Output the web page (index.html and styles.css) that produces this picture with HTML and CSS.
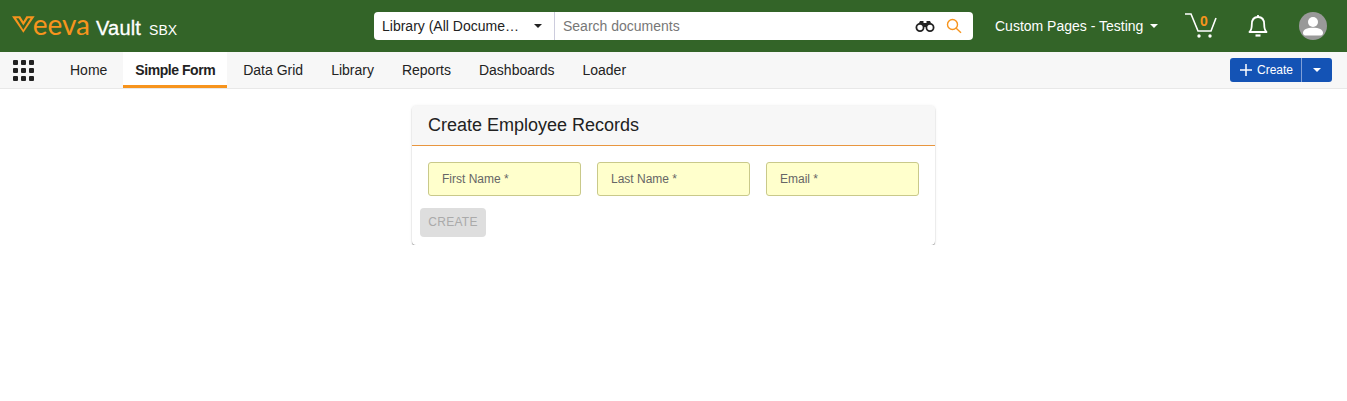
FILE: index.html
```html
<!DOCTYPE html>
<html>
<head>
	<title>Vault</title>
	<link rel="stylesheet" href="styles.css">
</head>
<body>
	<header class="topbar">
		<div class="brand">
			<span class="veeva"><svg class="veeva-v" viewBox="0 0 22 16" width="24" height="17"><path d="M0 0H8L11 5 14 0H22L11 16Z M4 2 11 13 18 2H15.500L11 9 6.500 2Z" fill="#f7941d" fill-rule="evenodd"/></svg>eeva</span>
			<span class="vault">Vault</span>
			<span class="sbx">SBX</span>
		</div>
		<div class="search">
			<div class="scope"><span class="scope-text">Library (All Docume…</span><i class="caret dark"></i></div>
			<div class="search-input">
				<span class="placeholder">Search documents</span>
				<svg class="binoculars" viewBox="0 0 20 12" width="20" height="12">
					<path d="M3 5 5 1H8.500V3H11.500V1H15L17 5 11.500 7H8.500Z" fill="#222"/>
					<circle cx="5" cy="7.500" r="3.600" fill="#fff" stroke="#222" stroke-width="1.800"/>
					<circle cx="15" cy="7.500" r="3.600" fill="#fff" stroke="#222" stroke-width="1.800"/>
				</svg>
				<svg class="magnifier" viewBox="0 0 16 16" width="16" height="16" fill="none" stroke="#f7941d" stroke-width="1.400"><circle cx="6.500" cy="6.500" r="5"/><path d="M10.200 10.200 15 14.800"/></svg>
			</div>
		</div>
		<div class="user-tools">
			<div class="vault-name">Custom Pages - Testing<i class="caret light"></i></div>
			<div class="cart">
				<svg viewBox="0 0 32 26" width="32" height="26" fill="none" stroke="#fff" stroke-width="1.600"><path d="M0 1H6L13 18H26L31 5"/><circle cx="14" cy="23" r="1.700" fill="#fff" stroke="none"/><circle cx="25" cy="23" r="1.700" fill="#fff" stroke="none"/></svg>
				<span class="cart-count">0</span>
			</div>
			<svg class="bell" viewBox="0 0 20 24" width="20" height="24" fill="none" stroke="#fff" stroke-width="1.800"><path d="M1.500 18C3.500 16 3.800 13.500 3.800 10.500 3.800 6 6 3 10 3S16.200 6 16.200 10.500C16.200 13.500 16.500 16 18.500 18Z" stroke-linejoin="round"/><path d="M10 1V3"/><path d="M7.500 21.500H12.500" stroke-width="2.200"/></svg>
			<svg class="avatar" viewBox="0 0 28 28" width="28" height="28"><circle cx="14" cy="14" r="14" fill="#999"/><circle cx="14" cy="10" r="5" fill="#fff"/><path d="M4 21C4 17.500 8 15.800 14 15.800S24 17.500 24 21C24 23 22.500 23.500 21 23.500H7C5.500 23.500 4 23 4 21Z" fill="#fff"/></svg>
		</div>
	</header>
	<nav class="tabbar">
		<div class="apps">
			<i></i><i></i><i></i><i></i><i></i><i></i><i></i><i></i><i></i>
		</div>
		<ul class="tabs">
			<li>Home</li>
			<li class="active">Simple Form</li>
			<li>Data Grid</li>
			<li>Library</li>
			<li>Reports</li>
			<li>Dashboards</li>
			<li>Loader</li>
		</ul>
		<div class="create-btn">
			<span class="create-main"><svg viewBox="0 0 12 12" width="12" height="12"><path d="M6 0V12M0 6H12" stroke="#fff" stroke-width="1.500"/></svg>Create</span>
			<span class="create-more"><i class="caret light"></i></span>
		</div>
	</nav>
	<main class="page">
		<section class="card">
			<h2 class="card-title">Create Employee Records</h2>
			<div class="card-body">
				<div class="fields">
					<div class="field">First Name *</div>
					<div class="field">Last Name *</div>
					<div class="field">Email *</div>
				</div>
				<button class="submit" disabled>CREATE</button>
			</div>
		</section>
	</main>
</body>
</html>
```

FILE: styles.css
```css
* {
	box-sizing: border-box;
}
body {
	margin: 0;
	background: #fff;
	color: #222;
	font-family: "Liberation Sans", Arial, sans-serif;
	font-size: 14px;
}
.caret {
	display: inline-block;
	width: 0;
	height: 0;
	border-left: 4.5px solid transparent;
	border-right: 4.5px solid transparent;
	border-top: 4.5px solid #fff;
}
.caret.dark {
	border-top-color: #222;
}

/* green bar */
.topbar {
	display: flex;
	align-items: center;
	height: 52px;
	padding-left: 12px;
	background: #336428;
}
.brand {
	display: flex;
	align-items: baseline;
	width: 362px;
	color: #fff;
}
.veeva {
	display: inline-flex;
	align-items: baseline;
	width: 78px;
	color: #f7941d;
	font-family: Lato, sans-serif;
	font-size: 28px;
	line-height: 24px;
}
.veeva-v {
	align-self: center;
	margin-right: -2px;
}
.vault {
	margin-left: 6px;
	font-size: 20px;
	letter-spacing: 0.2px;
	-webkit-text-stroke: 0.3px #fff;
}
.sbx {
	margin-left: 8px;
	font-size: 14px;
}
.search {
	display: flex;
	width: 599px;
	height: 28px;
	background: #fff;
	border-radius: 4px;
}
.scope {
	display: flex;
	align-items: center;
	justify-content: space-between;
	width: 181px;
	padding: 0 12px 0 8px;
	border-right: 1px solid #ccd;
}
.scope-text {
	white-space: nowrap;
}
.search-input {
	display: flex;
	align-items: center;
	flex: 1;
	padding: 0 11px 0 8px;
}
.placeholder {
	flex: 1;
	color: #777;
}
.binoculars {
	margin-right: 11px;
}
.user-tools {
	display: flex;
	align-items: center;
	margin-left: 22px;
	color: #fff;
}
.vault-name {
	display: flex;
	align-items: center;
	gap: 7px;
	width: 190px;
}
.cart {
	position: relative;
	width: 32px;
	height: 26px;
}
.cart-count {
	position: absolute;
	top: 0;
	left: 15px;
	color: #f7941d;
	font-size: 14px;
	font-weight: bold;
}
.bell {
	margin-left: 31px;
}
.avatar {
	margin-left: 31px;
}

/* tab row */
.tabbar {
	display: flex;
	align-items: center;
	height: 37px;
	padding: 0 15px 0 13px;
	background: #f7f7f7;
	border-bottom: 1px solid #e8e8e8;
}
.apps {
	display: grid;
	grid-template-columns: repeat(3, 5px);
	gap: 3px;
	width: 45px;
}
.apps i {
	height: 5px;
	background: #222;
	border-radius: 1px;
}
.tabs {
	display: flex;
	flex: 1;
	gap: 4px;
	height: 36px;
	margin: 0;
	padding: 0;
	list-style: none;
}
.tabs li {
	padding: 10px 12px 0;
}
.tabs .active {
	background: #fff;
	border-bottom: 3px solid #f7941d;
	font-weight: bold;
	letter-spacing: -0.45px;
}
.create-btn {
	display: flex;
	height: 24px;
	color: #fff;
	background: #1453b5;
	border-radius: 3px;
	font-size: 12px;
}
.create-main {
	display: flex;
	align-items: center;
	gap: 5px;
	width: 72px;
	padding-left: 10px;
	border-right: 1px solid #7f9fd8;
}
.create-more {
	display: flex;
	align-items: center;
	justify-content: center;
	width: 30px;
}

/* form */
.page {
	display: flex;
	justify-content: center;
	padding-top: 17px;
}
.card {
	width: 523px;
	border-radius: 4px;
	box-shadow: 0 1px 1px rgba(0, 0, 0, 0.4), 0 0 3px rgba(0, 0, 0, 0.1);
}
.card-title {
	height: 40px;
	margin: 0;
	padding: 9px 16px 0;
	background: #f7f7f7;
	border-bottom: 1px solid #e8963f;
	border-radius: 4px 4px 0 0;
	font-size: 18px;
	font-weight: normal;
}
.card-body {
	padding: 16px 16px 8px 8px;
}
.fields {
	display: flex;
	gap: 16px;
	margin-left: 8px;
}
.field {
	flex: 1;
	height: 34px;
	padding: 9px 13px 0;
	color: #666;
	background: #ffc;
	border: 1px solid #c9c98a;
	border-radius: 3px;
	font-size: 12px;
}
.submit {
	display: block;
	width: 66px;
	height: 29px;
	margin-top: 12px;
	padding: 0 0 2px;
	color: #aaa;
	background: #dedede;
	border: 0;
	border-radius: 4px;
	font-family: inherit;
	font-size: 12px;
	letter-spacing: 0.3px;
}
```
